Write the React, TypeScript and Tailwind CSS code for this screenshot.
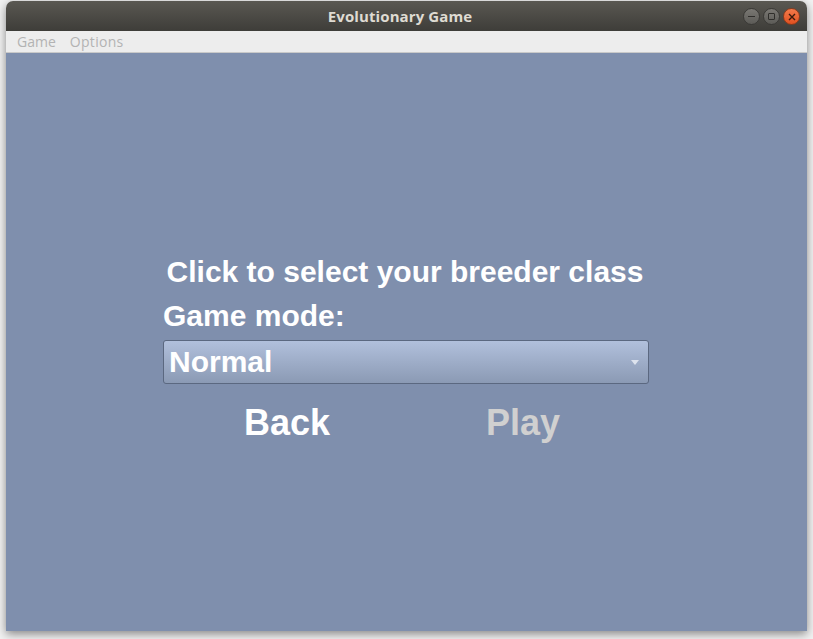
import React from "react";

export default function App() {
  return (
    <div className="w-[813px] h-[639px] bg-[#f2f2f2] overflow-hidden pt-[1px] pl-[6px]" style={{ fontFamily: '"Liberation Sans", Arial, sans-serif' }}>
      <div className="w-[801px] h-[630px] flex flex-col shadow-[0_3px_10px_rgba(0,0,0,0.45)] rounded-t-[7px]">
        {/* Title bar */}
        <div className="h-[30px] rounded-t-[7px] bg-gradient-to-b from-[#5a5852] to-[#3e3d39] relative flex items-center justify-center">
          <span className="text-[15px] font-bold text-[#dfdbd2] tracking-[0.1px] pr-[13px]" style={{ fontFamily: '"Open Sans", "DejaVu Sans", sans-serif' }}>
            Evolutionary Game
          </span>
          <div className="absolute right-[7px] top-[7px] flex gap-[3px]">
            <div className="w-[17px] h-[17px] rounded-full bg-gradient-to-b from-[#7a7873] to-[#5c5b57] border border-[#3a3936] flex items-center justify-center">
              <div className="w-[7px] h-[1.5px] bg-[#2f2e2b]" />
            </div>
            <div className="w-[17px] h-[17px] rounded-full bg-gradient-to-b from-[#7a7873] to-[#5c5b57] border border-[#3a3936] flex items-center justify-center">
              <div className="w-[7px] h-[7px] border border-[#2f2e2b] rounded-[1px]" />
            </div>
            <div className="w-[17px] h-[17px] rounded-full bg-gradient-to-b from-[#f47a4a] to-[#e0501f] border border-[#8a3a1c] flex items-center justify-center">
              <svg width="8" height="8" viewBox="0 0 8 8">
                <path d="M1 1 L7 7 M7 1 L1 7" stroke="#3a1a0c" strokeWidth="1.4" />
              </svg>
            </div>
          </div>
        </div>
        {/* Menu bar */}
        <div className="h-[22px] bg-[#ededed] border-b border-[#c9c9c9] flex items-center pl-[11px] gap-[14px] text-[14px] text-[#b3b3b3]" style={{ fontFamily: '"Open Sans", "DejaVu Sans", sans-serif' }}>
          <span>Game</span>
          <span className="tracking-[0.3px]">Options</span>
        </div>
        {/* Content */}
        <div className="flex-1 bg-[#7f8fad] flex flex-col items-start pl-[157px] pt-[202px]">
          <div className="w-[486px] flex flex-col">
            <div className="text-[30px] leading-[34px] font-bold text-white text-center pr-[2px]">
              Click to select your breeder class
            </div>
            <div className="mt-[10px] text-[30px] leading-[34px] font-bold text-white">
              Game mode:
            </div>
            <div className="mt-[7px] h-[44px] rounded-[3px] border border-[#5b6880] bg-gradient-to-b from-[#b1c0dc] to-[#8b9ab4] flex items-center justify-between pl-[5px] pr-[9px]">
              <span className="text-[30px] leading-[34px] font-bold text-white">Normal</span>
              <svg width="8" height="5" viewBox="0 0 8 5">
                <path d="M0 0 L8 0 L4 5 Z" fill="#dde3ee" />
              </svg>
            </div>
            <div className="mt-[19px] flex justify-start pl-[81px] gap-[156px] text-[36px] leading-[40px] font-bold">
              <span className="text-white">Back</span>
              <span className="text-[#d0d0d0]">Play</span>
            </div>
          </div>
        </div>
      </div>
    </div>
  );
}
